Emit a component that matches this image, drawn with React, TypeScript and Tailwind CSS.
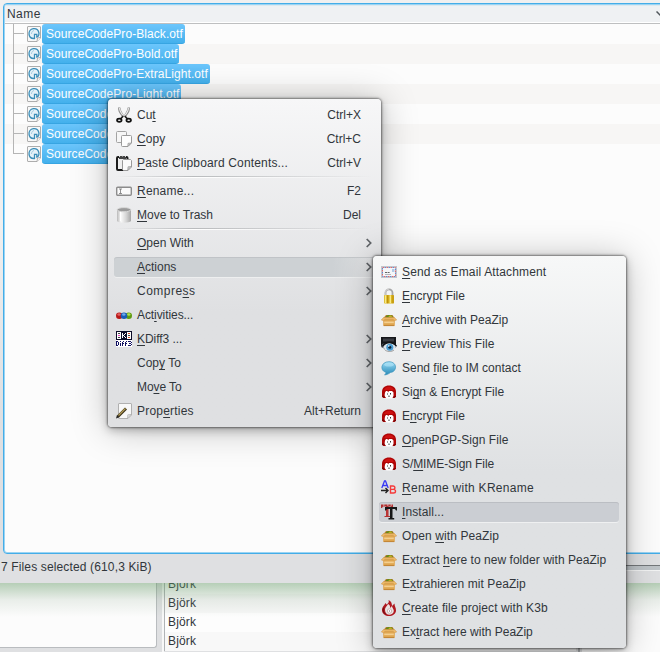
import React from "react";

type Item = {
  label: string;
  key: number;
  icon?: React.ReactNode;
  short?: string;
  arrow?: boolean;
  active?: boolean;
  spacing?: string;
};

function Svg({ children }: { children: React.ReactNode }) {
  return (
    <svg width="16" height="16" viewBox="0 0 16 16" className="block">
      {children}
    </svg>
  );
}

const Cut = () => (
  <Svg>
    <path d="M3.500 0.500c-.8 2.500.3 4 3.500 8.500M12.500 .5c.8 2.500-.3 4-3.500 8.500" stroke="#8a8a8a" strokeWidth="2.400" fill="none" />
    <path d="M3.600 1c-.3 2.500.8 4 3.600 7.500M12.400 1c.3 2.500-.8 4-3.600 7.500" stroke="#ececec" strokeWidth="1.100" fill="none" />
    <path d="M7.300 9L4.800 11.700M8.700 9l2.500 2.700" stroke="#222" strokeWidth="1.700" />
    <ellipse cx="3.300" cy="13.200" rx="2.300" ry="1.600" fill="#eee" stroke="#111" strokeWidth="1.700" />
    <ellipse cx="12.700" cy="13.200" rx="2.300" ry="1.600" fill="#eee" stroke="#111" strokeWidth="1.700" />
  </Svg>
);
const Copy = () => (
  <Svg>
    <rect x=".5" y=".5" width="10" height="11" rx="1" fill="#f6f6f6" stroke="#a3a3a3" />
    <path d="M6.500 4.500h8a1 1 0 0 1 1 1v6.500l-3.500 3.500H6.500a1 1 0 0 1-1-1V5.500a1 1 0 0 1 1-1z" fill="#fdfdfd" stroke="#9a9a9a" />
    <path d="M15 12l-3 .3-.2 3z" fill="#ccc" stroke="#999" strokeWidth=".7" />
  </Svg>
);
const Paste = () => (
  <Svg>
    <rect x="1" y="2" width="10.500" height="13" rx="1" fill="#eee" stroke="#1c1c1c" strokeWidth="2" />
    <path d="M3 2.500h7" stroke="#444" strokeWidth="3" />
    <path d="M3 1.500h1m2-.5h1m2 .5h1" stroke="#ddd" />
    <path d="M7.500 4.500h7l1 1v6.500L12 15.500H7.500l-1-1v-9z" fill="#fafafa" stroke="#999" />
    <path d="M15 11.500l-3 .3-.2 3.200z" fill="#ccc" stroke="#999" strokeWidth=".7" />
  </Svg>
);
const Rename = () => (
  <Svg>
    <rect x=".7" y="4.200" width="14.600" height="8.100" rx="1" fill="#fafafa" stroke="#8c8c8c" strokeWidth="1.400" />
    <path d="M3 6h3M4.500 6v4.500M3 10.500h3" stroke="#777" strokeWidth=".8" />
  </Svg>
);
const Trash = () => (
  <Svg>
    <defs>
      <linearGradient id="can">
        <stop stopColor="#b9b9b9" />
        <stop offset=".28" stopColor="#fafafa" />
        <stop offset=".65" stopColor="#d6d6d6" />
        <stop offset="1" stopColor="#a6a6a6" />
      </linearGradient>
    </defs>
    <path d="M1 2.500v11.500c1.300 2.300 12.700 2.300 14 0V2.500z" fill="url(#can)" />
    <ellipse cx="8" cy="2.700" rx="6.800" ry="2.100" fill="#9a9a9a" stroke="#d9d9d9" />
    <path d="M4.500 5v9" stroke="#fff" />
  </Svg>
);
const Activities = () => (
  <Svg>
    <circle cx="3.300" cy="8.700" r="3.300" fill="#b81818" />
    <circle cx="12.700" cy="8.700" r="3.300" fill="#5f9a12" />
    <circle cx="8" cy="8.700" r="3.300" fill="#1a5cb8" />
    <ellipse cx="3" cy="7.500" rx="1.700" ry="1.200" fill="#e46060" />
    <ellipse cx="7.800" cy="7.500" rx="1.700" ry="1.200" fill="#6fa9ea" />
    <ellipse cx="12.800" cy="7.500" rx="1.700" ry="1.200" fill="#b0e050" />
  </Svg>
);
const KDiff = () => (
  <Svg>
    <g shapeRendering="crispEdges">
      <rect width="16" height="16" fill="#fff" />
      <path d="M0 0h16v9H0z" fill="#0c0c28" />
      <path d="M1 1h4v7H1zM11 1h4v7h-4z" fill="#fff" />
      <path d="M2 2h2v1H2zM2 6h2v1H2z" fill="#444" />
      <path d="M2 4h2v1H2z" fill="#e040c0" />
      <path d="M12 4h2v1h-2z" fill="#444" />
      <path d="M12 2h2v1h-2zM12 6h2v1h-2z" fill="#d05030" />
      <path d="M6 2h1v5H6zM9 2h1v1H9zM8 3h1v1H8zM7 4h1v1H7zM8 5h1v1H8zM9 6h1v1H9z" fill="#fff" />
      <path d="M0 10h1v5H0zM1 10h1v1H1zM1 14h1v1H1zM2 11h1v3H2zM4 10h1v1H4zM4 12h1v3H4zM6 11h1v4H6zM7 10h1v1H7zM7 12h1v1H7zM9 11h1v4H9zM10 10h1v1h-1zM10 12h1v1h-1zM12 10h3v1h-3zM13 12h2v1h-2zM12 14h3v1h-3zM15 11h1v1h-1zM15 13h1v1h-1z" fill="#101060" />
    </g>
  </Svg>
);
const Props = () => (
  <Svg>
    <path d="M3 .5h12a.5.5 0 0 1 .5.500v11L12 15.500H3a.5.5 0 0 1-.5-.5V1A.5.5 0 0 1 3 .5z" fill="#f8f8f8" stroke="#b0b0b0" />
    <path d="M15 11.500l-3.200.3-.2 3.400z" fill="#e8e8e8" stroke="#aaa" strokeWidth=".7" />
    <path d="M2 13.500L10 5.500" stroke="#3b3016" strokeWidth="2.800" />
    <path d="M2.500 12.500L9.500 5.500" stroke="#b19b56" strokeWidth="1.200" />
    <path d="M0 15.500l1-3.500 2.300 2.300z" fill="#222" />
  </Svg>
);
const Mail = () => (
  <Svg>
    <rect x=".5" y="2.500" width="15" height="11" fill="#f5f6f8" stroke="#c3c6cd" />
    <rect x="1.500" y="3.500" width="13" height="9" fill="none" stroke="#d44d4d" strokeDasharray="1.300 2.700" />
    <rect x="1.500" y="3.500" width="13" height="9" fill="none" stroke="#4671bd" strokeDasharray="1.300 2.700" strokeDashoffset="2" />
    <path d="M4 10.500h6" stroke="#b3b6bc" />
    <path d="M11 5h2.500v3H11z" fill="#b0c9e6" />
    <path d="M4 8.500h5" stroke="#666" strokeDasharray="2 .6" />
  </Svg>
);
const Lock = () => (
  <Svg>
    <path d="M4.500 8V4.800a3.500 3.500 0 0 1 7 0V8" fill="none" stroke="#a6a6a6" strokeWidth="1.800" />
    <path d="M4.200 8V4.800A3.800 3.800 0 0 1 8 1.100" fill="none" stroke="#ddd" strokeWidth=".8" />
    <rect x="3" y="7" width="10" height="8.500" rx=".8" fill="#d8b31f" />
    <path d="M4.500 7.300v8M9.300 7.300v8" stroke="#f7e989" strokeWidth="1.500" />
    <path d="M6.700 7.300v8M12 7.300v8" stroke="#b98b0a" strokeWidth="1" />
  </Svg>
);
const Pea = () => (
  <Svg>
    <path d="M2.500 6L5 3h6.500L13.500 6z" fill="#b87c2e" />
    <path d="M4.500 5.500c0-3 7-3.500 7.500 0z" fill="#5f8a1c" />
    <path d="M7.500 5c0-2 3.500-2 3.500 0z" fill="#c0b01d" />
    <path d="M2.200 7h11.600v6a1 1 0 0 1-1 1H3.200a1 1 0 0 1-1-1z" fill="#dfa650" />
    <path d="M2.500 5.500h11L15.700 8l-2.500.8-1-1.500H3.800l-1 1.500L.3 8z" fill="#ecb868" stroke="#cf9546" strokeWidth=".5" />
    <path d="M3.200 9.500h9.600v1.700H3.200z" fill="#f4cf8f" />
    <path d="M2.700 13.600h10.600" stroke="#bd8033" strokeWidth=".9" />
  </Svg>
);
const Preview = () => (
  <Svg>
    <path d="M0 1h15v11l-3-1-8 1-4-2z" fill="#15171a" />
    <path d="M2 2.500h11v3H2z" fill="#3a3d43" />
    <path d="M1 8l3-1v6l-4-2z" fill="#555a60" />
    <path d="M2 11C4.500 6 11.500 6 15.500 10.500 12 16.500 6 16 2 11z" fill="#dce6ee" />
    <path d="M1.500 10.500C4.500 5 11.500 5 15.500 10.300" fill="none" stroke="#15171a" strokeWidth="1.500" />
    <circle cx="8.800" cy="11.200" r="3.500" fill="#4b9fd5" />
    <circle cx="8.800" cy="11.200" r="1.500" fill="#10263c" />
    <circle cx="7.800" cy="10" r=".8" fill="#fff" />
    <path d="M3.500 13.500c2 2.500 7.500 2.500 9.500.5" stroke="#888" fill="none" strokeWidth=".8" />
  </Svg>
);
const Bubble = () => (
  <Svg>
    <defs>
      <linearGradient id="bub" x2="0" y2="1">
        <stop stopColor="#9adcf5" />
        <stop offset="1" stopColor="#2789b8" />
      </linearGradient>
    </defs>
    <path d="M3.500 15c1.200-1 1.500-2 1.300-2.700C-1.500 10.500 0 1.700 7.800 1.700c8.700 0 8.700 9.800 1.700 10.800C8 13.700 6 14.700 3.500 15z" fill="url(#bub)" stroke="#4196bd" strokeWidth=".7" />
    <ellipse cx="8" cy="4.500" rx="4.800" ry="2" fill="#b5e6f8" opacity=".6" />
  </Svg>
);
const Kleo = () => (
  <Svg>
    <path d="M1 12.500V8C1 3.800 3.800 1.500 8 1.500S15 3.800 15 8v4.500l-1.500 1.500h-11z" fill="#b00606" />
    <path d="M3 6C4 3.500 6 2.700 8 2.700S12 3.500 13 6z" fill="#cf1212" />
    <path d="M4 8.500L5 7h1.500l.5 1.500L8 7h3l1.500 1.500v4L11 14.500H5.500L3.500 12z" fill="#fff" />
    <path d="M6 9.500h1v1H6zM9 9h1v1.500H9zM7 11.700h2v.9H7z" fill="#333" />
    <path d="M1 11.500h2.500V14L1 13zM12.500 12H15v1l-2.500 1z" fill="#7d0404" />
  </Svg>
);
const KRename = () => (
  <Svg>
    <path d="M.8 8L3.500 1h1L7.200 8M2 5.500h4" fill="none" stroke="#3a3af5" strokeWidth="1.300" />
    <path d="M0 10.500h6M4.500 8l2.500 2.500L4.500 13" fill="none" stroke="#222" strokeWidth="1.400" />
    <path d="M9.500 6v7h3c2.700 0 2.700-3.600 0-3.600h-3 2.500c2.500 0 2.500-3.400 0-3.400z" fill="none" stroke="#f53a3a" strokeWidth="1.400" />
  </Svg>
);
const Install = () => (
  <Svg>
    <path d="M0 .5h12v3.500H11L10 2.500H7.500V12H9v1H3.500v-1H5V2.500H2L1 4H0z" fill="#b33030" />
    <path d="M2 .5h1.500v1H2zM6 .5h1.500v1H6zM9.500 .5H11v1H9.500z" fill="#e6c5c5" />
    <path d="M4 3h12v3.500h-1L14 5h-2.500v9h1.700v1.500H7.500V14H9V5H6.500L5 6.500H4z" fill="#161616" />
    <path d="M5.500 5.500h1V12h-1z" fill="#c23b3b" />
  </Svg>
);
const K3b = () => (
  <Svg>
    <path d="M7.500 0c1 2-.5 3.500-2 4.500L4.500 3C3 6 .8 7 1 10.500 1.200 14 4.500 16 8 16s7-2 7-5.500c0-3-1.500-4-1.500-7l-2.500 2.500C11 3 10 1 7.500 0z" fill="#b01820" />
    <path d="M4 10c0-3 2-3.500 3-6 2.500 1 2 3 2 4l2-2c0 2 2 3 1.800 5-.3 2.500-2.300 3.800-4.500 3.800S4 13 4 10z" fill="#e9e2e2" />
    <circle cx="8.500" cy="11" r="2.200" fill="#fff" stroke="#b99" strokeWidth=".7" />
    <circle cx="8.500" cy="11" r=".7" fill="#888" />
    <path d="M3 7.500c-1.500 2.500-.5 5.500 1.500 6.500" fill="none" stroke="#5e0d11" />
  </Svg>
);

const mainMenu: (Item | null)[] = [
  { label: "Cut", key: 2, icon: <Cut />, short: "Ctrl+X" },
  { label: "Copy", key: 0, icon: <Copy />, short: "Ctrl+C", spacing: "tracking-[0.1px]" },
  { label: "Paste Clipboard Contents...", key: 0, icon: <Paste />, short: "Ctrl+V", spacing: "tracking-[0.16px]" },
  null,
  { label: "Rename...", key: 0, icon: <Rename />, short: "F2", spacing: "tracking-[0.2px]" },
  { label: "Move to Trash", key: 0, icon: <Trash />, short: "Del" },
  null,
  { label: "Open With", key: 0, arrow: true },
  { label: "Actions", key: 0, arrow: true, active: true },
  { label: "Compress", key: 6, arrow: true, spacing: "tracking-[0.48px]" },
  { label: "Activities...", key: 3, icon: <Activities />, spacing: "tracking-[-0.08px]" },
  { label: "KDiff3 ...", key: 0, icon: <KDiff />, arrow: true, spacing: "tracking-[-0.05px]" },
  { label: "Copy To", key: 3, arrow: true },
  { label: "Move To", key: 2, arrow: true, spacing: "tracking-[-0.1px]" },
  { label: "Properties", key: 4, icon: <Props />, short: "Alt+Return", spacing: "tracking-[0.2px]" },
];

const actions: Item[] = [
  { label: "Send as Email Attachment", key: 0, icon: <Mail />, spacing: "tracking-[0.15px]" },
  { label: "Encrypt File", key: 0, icon: <Lock />, spacing: "tracking-[-0.04px]" },
  { label: "Archive with PeaZip", key: 0, icon: <Pea /> },
  { label: "Preview This File", key: 0, icon: <Preview />, spacing: "tracking-[0.08px]" },
  { label: "Send file to IM contact", key: 5, icon: <Bubble /> },
  { label: "Sign & Encrypt File", key: 2, icon: <Kleo /> },
  { label: "Encrypt File", key: 1, icon: <Kleo />, spacing: "tracking-[-0.04px]" },
  { label: "OpenPGP-Sign File", key: 0, icon: <Kleo />, spacing: "tracking-[0.06px]" },
  { label: "S/MIME-Sign File", key: 2, icon: <Kleo />, spacing: "tracking-[-0.08px]" },
  { label: "Rename with KRename", key: 0, icon: <KRename />, spacing: "tracking-[0.27px]" },
  { label: "Install...", key: 0, icon: <Install />, active: true, spacing: "tracking-[0.08px]" },
  { label: "Open with PeaZip", key: 5, icon: <Pea />, spacing: "tracking-[0.1px]" },
  { label: "Extract here to new folder with PeaZip", key: 8, icon: <Pea />, spacing: "tracking-[0.04px]" },
  { label: "Extrahieren mit PeaZip", key: 1, icon: <Pea />, spacing: "tracking-[0.08px]" },
  { label: "Create file project with K3b", key: 0, icon: <K3b />, spacing: "tracking-[0.08px]" },
  { label: "Extract here with PeaZip", key: 2, icon: <Pea /> },
];

function Label({ item }: { item: Item }) {
  return (
    <span className={`grow whitespace-nowrap ${item.spacing ?? ""}`}>
      {item.label.slice(0, item.key)}
      <span className="underline decoration-1 underline-offset-[2px] [text-decoration-skip-ink:none]">
        {item.label[item.key]}
      </span>
      {item.label.slice(item.key + 1)}
    </span>
  );
}

function FileIcon() {
  return (
    <svg width="14" height="16" viewBox="0 0 14 16" className="block shrink-0">
      <path d="M1 .5h12a.5.5 0 0 1 .5.500v11L10 15.500H1a.5.5 0 0 1-.5-.5V1a.5.5 0 0 1 .5-.5z" fill="#f8f8f8" stroke="#adadad" />
      <path d="M13.500 11.500l-3 .5-.5 3.500" fill="#fff" stroke="#999" strokeWidth=".8" />
      <path d="M7.500 12.500C.5 13 .3 3.500 6.300 2.700 12.500 2 13.500 10 9.800 11V8.300H7.500z" fill="#e3f1f8" stroke="#3a8db8" strokeWidth="1.300" />
      <path d="M4.500 8c0-2 1-3 2.500-3.500" stroke="#a5cde2" fill="none" />
    </svg>
  );
}

const files = ["Black", "Bold", "ExtraLight", "Light", "Medium", "Regular", "Semibold"];

function FileRow({ name, index }: { name: string; index: number }) {
  const last = index === files.length - 1;
  return (
    <div className={`flex h-5 items-center pl-2 ${index % 2 ? "bg-[#f7f6f5]" : "bg-[#fcfcfc]"}`}>
      <div className="flex h-5 w-[14px] flex-col pr-[3px]">
        <div className="h-[10px] w-full border-b border-l border-[#b5b5b5]" />
        <div className={`h-[10px] ${last ? "" : "border-l border-[#b5b5b5]"}`} />
      </div>
      <div className="w-[15px]"><FileIcon /></div>
      <div className="h-5 rounded-[3px] border-b border-[#37a5e2] bg-linear-to-b from-[#6cc6fc] to-[#43b0ec] pr-[2px] pl-[4px] leading-[20px] tracking-[0.06px] whitespace-nowrap text-white">
        SourceCodePro-{name}.otf
      </div>
    </div>
  );
}

function Chevron() {
  return (
    <svg width="6" height="10" viewBox="0 0 6 10" className="block shrink-0">
      <path d="M.7 1L4.700 5 .7 9" fill="none" stroke="#606468" strokeWidth="1.700" />
    </svg>
  );
}

export default function App() {
  return (
    <div className="relative flex h-[652px] w-[660px] flex-col overflow-hidden bg-[#dfe0e2] font-['Liberation_Sans',Arial,sans-serif] text-[12px] text-[#31363b]">
      <div className="h-[554px] bg-[#efefef] bg-linear-to-b from-[#f0f0f0] from-[40%] to-[#dfe0e2] to-[75%] pt-[3px] pl-[3px]">
        <div className="flex h-[551px] w-[670px] flex-col rounded-[4px] border border-[#43ade8] bg-[#fcfcfc] shadow-[inset_0_0_0_1px_#9bd4f3]">
          <div className="m-px mb-0 flex h-[17px] items-center rounded-t-[2px] border-t border-[#dce9f0] bg-[#eff1f3] pl-[2px] text-[12px] tracking-[0.45px]">
            <span className="w-[649px]">Name</span>
            <svg width="9" height="6" viewBox="0 0 9 6"><path d="M.5.5l4 4 4-4" fill="none" stroke="#50565b" strokeWidth="1.500" /></svg>
          </div>
          <div className="mx-px h-[2px] border-b border-[#bebfc0] bg-white" />
          <div className="mx-px">
            {files.map((f, i) => <FileRow key={f} name={f} index={i} />)}
          </div>
        </div>
      </div>
      <div className="flex h-[29px] shrink-0 bg-[#dfe0e2]">
        <div className="grow pl-px leading-[26px] tracking-[0.14px]">7 Files selected (610,3 KiB)</div>
        <div className="flex w-[60px] flex-col">
          <div className="h-[11px]" />
          <div className="h-px bg-[#73777a]" />
          <div className="h-1 bg-[#bec4c8]" />
          <div className="h-px bg-[#f3f4f4]" />
        </div>
      </div>
      <div className="relative flex h-[69px] shrink-0">
        <div className="h-[65px] w-[157px] rounded-br-[3px] border-r border-b border-[#b9bcbf] bg-[#fcfcfc]" />
        <div className="ml-[5px] flex w-[414px] flex-col overflow-hidden border-l-2 border-[#f8f8f8]">
          <div className="-mt-[8px] border-l border-[#b0b3b6]">
            {[0, 1, 2, 3].map((i) => (
              <div key={i} className={`h-[19px] pl-[3px] leading-[19px] tracking-[0.15px] ${i % 2 ? "bg-[#f8f8f8]" : "bg-[#fdfdfd]"}`}>Björk</div>
            ))}
          </div>
        </div>
        <div className="mx-[2px] w-[2px] bg-[#a8abae]" />
        <div className="grow bg-[#fcfcfc]" />
        <div className="absolute inset-x-0 top-0 h-[34px] bg-linear-to-b from-[#5f966173] via-[#7d9c7e26] to-transparent" />
      </div>

      <div className="absolute top-[99px] left-[108px] h-[328px] w-[273px] rounded-[4px] bg-linear-to-b from-[#f7f7f8] to-[#dfe0e2] to-[65%] py-1 shadow-[0_0_2px_1px_#00000070,0_3px_10px_#00000045,0_2px_36px_#00000040]">
        {mainMenu.map((item, i) =>
          item === null ? (
            <div key={i} className="flex h-1 flex-col px-[8px] pt-px">
              <div className="h-px bg-linear-to-r from-transparent via-[#b9bbbd] via-[30%] to-transparent" />
              <div className="h-px bg-linear-to-r from-transparent via-white via-[30%] to-transparent" />
            </div>
          ) : (
            <div key={i} className="h-6 px-[6px] py-[2px]">
              <div className={`flex h-[20px] items-center rounded-[3px] pr-[3px] pl-[2px] leading-[20px] ${item.active ? "bg-linear-to-r from-[#cdd1d4] from-[84%] to-transparent shadow-[inset_0_1px_0_#b4b8bc88,0_1px_0_#ffffff66]" : ""}`}>
                <div className="mr-[5px] w-4 shrink-0">{item.icon}</div>
                <Label item={item} />
                {item.short && <span className="mr-[11px] whitespace-nowrap">{item.short}</span>}
                {item.arrow && <Chevron />}
              </div>
            </div>
          ),
        )}
      </div>

      <div className="absolute top-[256px] left-[373px] h-[392px] w-[253px] rounded-[4px] bg-linear-to-b from-[#f7f8f8] to-[#dfe1e3] to-[55%] py-1 shadow-[0_0_2px_1px_#00000070,0_3px_10px_#00000045,0_2px_36px_#00000040]">
        {actions.map((item, i) => (
          <div key={i} className="h-6 py-[2px] pr-[7px] pl-[6px]">
            <div className={`flex h-[20px] items-center rounded-[3px] pl-[2px] leading-[20px] ${item.active ? "bg-[#cbced3] shadow-[inset_0_1px_0_#bbbec3,0_1px_0_#eff0f1]" : ""}`}>
              <div className="mr-[5px] w-4 shrink-0">{item.icon}</div>
              <Label item={item} />
            </div>
          </div>
        ))}
      </div>
    </div>
  );
}
